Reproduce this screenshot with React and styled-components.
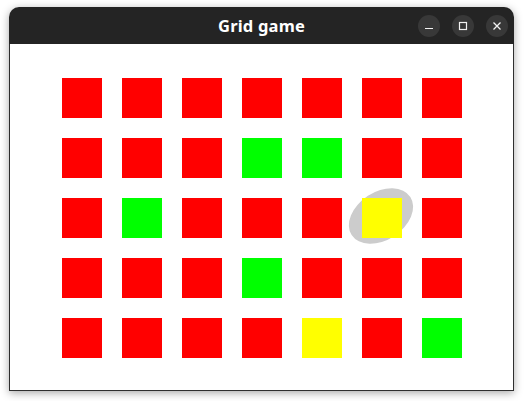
import React from 'react';
import styled, { createGlobalStyle } from 'styled-components';

const GlobalStyle = createGlobalStyle`
    html, body {
        margin: 0;
        padding: 0;
        background: #ffffff;
        font-family: "Noto Sans", "DejaVu Sans", sans-serif;
    }
`;

const Page = styled.div`
    width: 524px;
    height: 401px;
    padding: 7px 0 0 9px;
    box-sizing: border-box;
`;

const Window = styled.div`
    width: 505px;
    border-radius: 10px 10px 0 0;
    box-shadow: 0 2px 9px rgba(0, 0, 0, 0.35);
    overflow: hidden;
`;

const TitleBar = styled.div`
    height: 37px;
    background: #242424;
    display: flex;
    align-items: center;
    justify-content: center;
    position: relative;
`;

const Title = styled.div`
    color: #ffffff;
    font-weight: 700;
    font-size: 16.5px;
    letter-spacing: 0.2px;
`;

const Controls = styled.div`
    position: absolute;
    right: 6px;
    top: 8px;
    display: flex;
    gap: 12px;
`;

const CtrlButton = styled.div`
    width: 22px;
    height: 22px;
    border-radius: 50%;
    background: #383838;
    display: flex;
    align-items: center;
    justify-content: center;
`;

const Content = styled.div`
    height: 347px;
    background: #ffffff;
    border: 1px solid #2e2e2e;
    border-top: none;
    box-sizing: border-box;
    padding: 34px 0 0 52px;
`;

const Grid = styled.div`
    display: grid;
    grid-template-columns: repeat(7, 40px);
    grid-auto-rows: 40px;
    gap: 20px;
`;

const Cell = styled.div`
    position: relative;
    width: 40px;
    height: 40px;
`;

const Square = styled.div`
    position: relative;
    z-index: 1;
    width: 40px;
    height: 40px;
    background: ${p => p.$color};
`;

const Halo = styled.div`
    position: absolute;
    left: -16px;
    top: -6px;
    width: 70px;
    height: 48px;
    border-radius: 50%;
    background: #cccccc;
    transform: rotate(-33deg);
    z-index: 0;
`;

const COLORS = { R: '#ff0000', G: '#00ff00', Y: '#ffff00' };

const rows = [
    'RRRRRRR',
    'RRRGGRR',
    'RGRRRYR',
    'RRRGRRR',
    'RRRRYRG',
];

const selected = { row: 2, col: 5 };

const App = () => {
    return (
        <Page>
            <GlobalStyle />
            <Window>
                <TitleBar>
                    <Title>Grid game</Title>
                    <Controls>
                        <CtrlButton>
                            <svg width="10" height="10" viewBox="0 0 10 10">
                                <path d="M1 7.5h8" stroke="#f2f2f2" strokeWidth="1.2" />
                            </svg>
                        </CtrlButton>
                        <CtrlButton>
                            <svg width="10" height="10" viewBox="0 0 10 10">
                                <rect x="1.5" y="1.5" width="7" height="7" fill="none" stroke="#f2f2f2" strokeWidth="1.2" />
                            </svg>
                        </CtrlButton>
                        <CtrlButton>
                            <svg width="10" height="10" viewBox="0 0 10 10">
                                <path d="M1.5 1.5l7 7M8.5 1.5l-7 7" stroke="#f2f2f2" strokeWidth="1.3" />
                            </svg>
                        </CtrlButton>
                    </Controls>
                </TitleBar>
                <Content>
                    <Grid>
                        {rows.map((row, r) =>
                            row.split('').map((c, i) => (
                                <Cell key={`${r}-${i}`}>
                                    {r === selected.row && i === selected.col && <Halo />}
                                    <Square $color={COLORS[c]} />
                                </Cell>
                            ))
                        )}
                    </Grid>
                </Content>
            </Window>
        </Page>
    );
};

export default App;
